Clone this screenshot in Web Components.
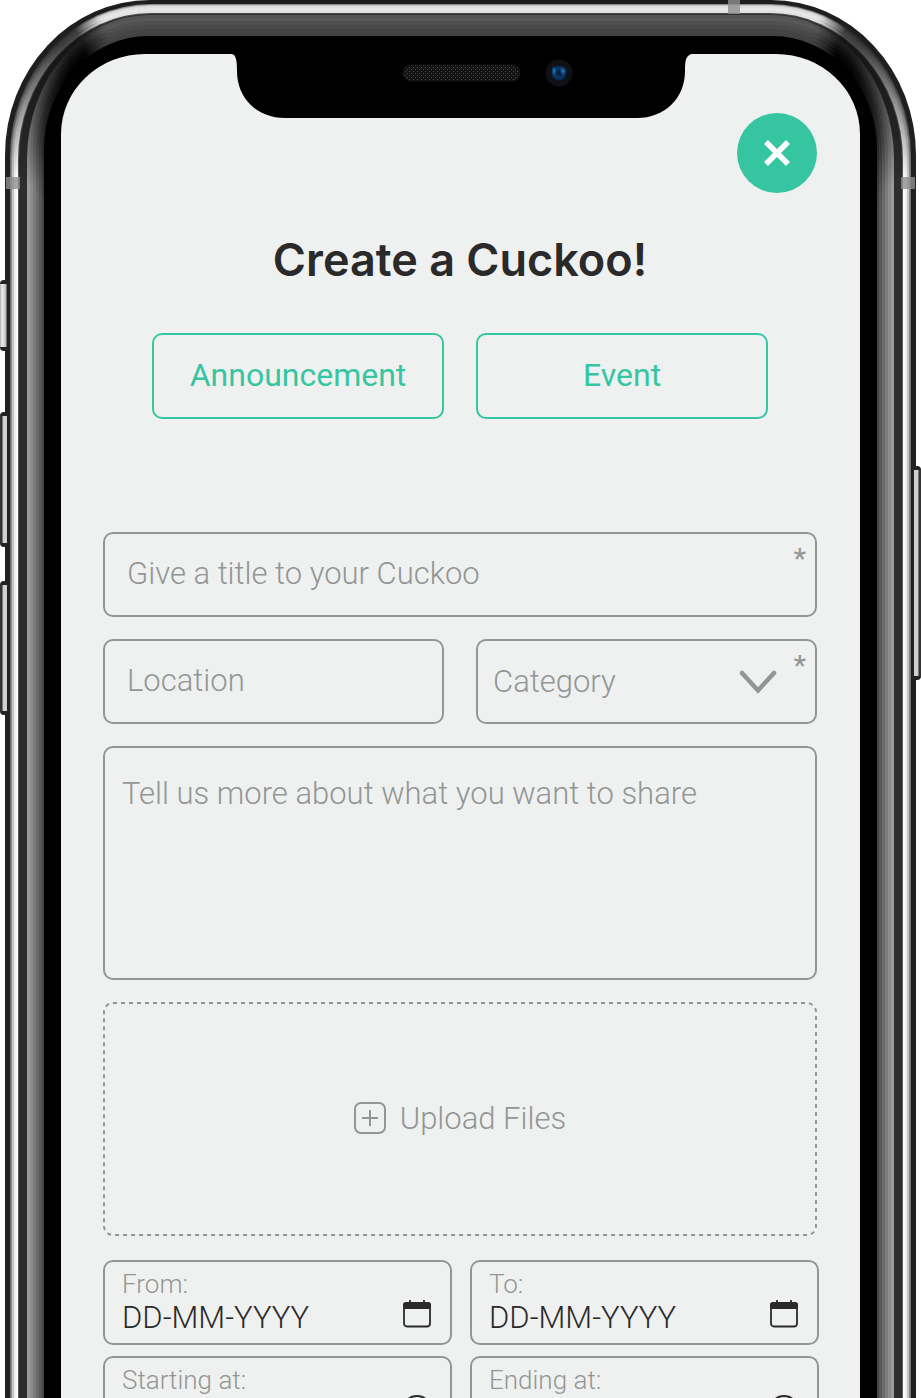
<!DOCTYPE html>
<html lang="en">
<head>
<meta charset="utf-8">
<meta name="viewport" content="width=device-width, initial-scale=1">
<title>Create a Cuckoo</title>
<style>
  body { margin: 0; background: #fff; color: #2a2a2a; font-family: Roboto, "Liberation Sans", sans-serif; font-weight: 300;
    --line: #939694; --accent: #35c6a1; --paper: #eff1f0; --ink: #2a2a2a; --text: 31px; }
  cuckoo-form { --gap: 22px; }
</style>
</head>
<body>
<phone-frame>
  <cuckoo-form></cuckoo-form>
</phone-frame>

<script>
const BASE = `*{box-sizing:border-box} button,input,select,textarea{font:inherit;color:inherit;margin:0;background:none}
  svg{display:block}
  .box{border:2px solid var(--edge,var(--line));border-radius:10px;width:100%;display:block}
  ::placeholder{color:var(--line);opacity:1}
  .star{position:absolute;right:11px;top:11px;font-size:28px;line-height:32px;font-weight:500;color:var(--line)}`;

function define(name, css, html, setup) {
  customElements.define(name, class extends HTMLElement {
    connectedCallback() {
      if (this.shadowRoot) return;
      const root = this.attachShadow({ mode: 'open' });
      root.innerHTML = `<style>${BASE}${css}</style>${typeof html === 'function' ? html(this) : html}`;
      if (setup) setup(root, this);
    }
  });
}

// Rings of the bezel from the outside in:
// [side width, top width, corner x radius, corner y radius, top colour, corner colour, side colour]
const RINGS = [
  [5, 4, 145, 155, '#1e1e1e', '#1e1e1e', '#202020'],
  [1, 1, 141, 152, '#8a8a8a', '#2a2a2a', '#707070'],
  [1, 1, 140, 151, '#c8c8c8', '#303030', '#8c8c8c'],
  [2, 2, 139, 150, '#dedede', '#383838', '#c4c4c4'],
  [2, 3, 137, 149, '#e6e6e6', '#404040', '#f0f0f0'],
  [2, 2, 135, 148, '#e0e0e0', '#484848', '#fdfdfd'],
  [1, 1, 133, 147, '#4a4a4a', '#222222', '#5c5c5c'],
  [8, 1, 132, 146, '#303030', '#151515', '#2d2d2d'],
  [3, 3, 122, 144, '#545454', '#1c1c1c', '#9a9a9a'],
  [3, 3, 119, 139, '#585858', '#181818', '#8c8c8c'],
  [3, 4, 116, 134, '#505050', '#101010', '#7c7c7c'],
  [3, 4, 113, 129, '#4a4a4a', '#080808', '#6a6a6a'],
  [3, 4, 110, 124, '#454545', '#040404', '#585858'],
  [2, 3, 107, 119, '#424242', '#000000', '#454545'],
  [17, 18, 104, 114, '#000000', '#000000', '#000000']
];

define('phone-frame', `
  :host{display:block;position:relative;height:100vh;overflow:hidden;padding:0 5px}
  .ring{padding:var(--t) var(--s) 0;border-radius:var(--rx) var(--rx) 0 0 / var(--ry) var(--ry) 0 0;height:100%;
    background:linear-gradient(var(--a) 0,var(--a) 11px,var(--b) 25px,var(--b) 38px,var(--c) 170px)}
  .screen{height:100%;background:var(--paper);border-radius:84px 84px 0 0 / 80px 80px 0 0;overflow:hidden auto;scrollbar-width:none}
  .over{position:absolute}
  .notch{top:53px;left:0;right:0;margin:auto;width:460px}
  .band{background:#8f8f8fcc}
  .key{background:linear-gradient(90deg,#333 0 2px,#777 2px 3px,#d0d0d0 3px 7px,#222 7px);border:solid #222;border-width:4px 0;border-radius:4px 0 0 4px;left:0;width:9px}
  .mute{background:linear-gradient(90deg,#aaa,#eee 2px,#bbb 6px,#222 7px)}
  .power{left:auto;right:0;transform:scaleX(-1)}`,
  `<div id="rings"></div>
   <svg class="over notch" viewBox="0 0 460 66" aria-hidden="true">
     <defs><pattern id="mesh" width="4" height="4" patternUnits="userSpaceOnUse"><rect width="4" height="4" fill="#141414"/><path d="M0 0h1v1H0zM2 2h1v1H2z" fill="#484848"/></pattern>
     <radialGradient id="lens"><stop offset="0" stop-color="#06182c"/><stop offset=".65" stop-color="#0b3a70"/><stop offset="1" stop-color="#061427"/></radialGradient>
     <radialGradient id="glint"><stop offset="0" stop-color="#2a8ad8"/><stop offset="1" stop-color="#0b3a70" stop-opacity="0"/></radialGradient></defs>
     <path d="M0 0v1C5 1 6 7 6 18C6 46 27 65 54 65H406C433 65 454 46 454 18C454 7 455 1 463 1V0Z"/>
     <rect x="172" y="12" width="117" height="16" rx="8" fill="url(#mesh)" stroke="#151515"/>
     <circle cx="328" cy="20" r="13.500" fill="#101114"/><circle cx="328" cy="20" r="8" fill="url(#lens)"/>
     <ellipse cx="323" cy="18" rx="3" ry="6" fill="url(#glint)"/><ellipse cx="332" cy="18" rx="4" ry="5" fill="url(#glint)"/>
   </svg>
   <div class="over band" style="left:6px;top:177px;width:14px;height:12px"></div>
   <div class="over band" style="right:6px;top:177px;width:14px;height:12px"></div>
   <div class="over band" style="right:181px;top:0;width:12px;height:14px"></div>
   <div class="over key mute" style="top:280px;height:71px"></div>
   <div class="over key" style="top:412px;height:135px"></div>
   <div class="over key" style="top:581px;height:134px"></div>
   <div class="over key power" style="top:466px;height:214px"></div>`,
  root => {
    let host = root.getElementById('rings');
    host.style.height = '100%';
    for (const [s, t, rx, ry, a, b, c] of RINGS) {
      const ring = document.createElement('div');
      ring.className = 'ring';
      Object.entries({ s: s + 'px', t: t + 'px', rx: rx + 'px', ry: ry + 'px', a, b, c }).forEach(([k, v]) => ring.style.setProperty('--' + k, v));
      host.append(ring);
      host = ring;
    }
    host.innerHTML = '<div class="screen"><slot></slot></div>';
  });

define('close-button', `
  :host{display:block}
  button{width:80px;height:80px;border:0;border-radius:50%;background:var(--accent);display:grid;place-items:center;padding:0}`,
  `<button type="button" aria-label="Close"><svg width="28" height="28" viewBox="0 0 28 28" fill="none" stroke="#fff" stroke-width="5.500"><path d="M3 3L25 25M25 3L3 25"/></svg></button>`);

define('type-button', `
  :host{display:block;flex:1;--edge:var(--accent)}
  button{height:86px;color:var(--accent);font-weight:400;font-size:32px;padding:0 0 2px}`,
  `<button type="button" class="box"><slot></slot></button>`);

define('text-field', `
  :host{display:block;position:relative}
  input{height:85px;padding:0 22px 2px;font-size:var(--text)}`,
  el => `<input class="box" type="text" placeholder="${el.getAttribute('hint')}" aria-label="${el.getAttribute('hint')}">
    ${el.hasAttribute('required') ? '<span class="star" aria-hidden="true">*</span>' : ''}`);

define('select-field', `
  :host{display:block;position:relative}
  select{appearance:none;height:85px;padding:0 15px;font-size:var(--text);color:var(--line)}
  svg{position:absolute;right:40px;top:31px;pointer-events:none}`,
  el => `<select class="box" aria-label="${el.getAttribute('hint')}"><option>${el.getAttribute('hint')}</option></select>
    <svg width="38" height="24" viewBox="0 0 38 24" fill="none" stroke="#939694" stroke-width="4.500" stroke-linecap="round"><path d="M3 3L19 20.500L35 3"/></svg>
    <span class="star" aria-hidden="true">*</span>`);

define('note-field', `
  :host{display:block}
  textarea{height:234px;resize:none;padding:28px 17px;font-size:var(--text);line-height:36px}`,
  el => `<textarea class="box" placeholder="${el.getAttribute('hint')}" aria-label="${el.getAttribute('hint')}"></textarea>`);

define('upload-box', `
  :host{display:block}
  label{position:relative;display:flex;align-items:center;justify-content:center;gap:14px;height:234px;color:var(--line);font-size:var(--text);padding-bottom:2px}
  .edge{position:absolute;inset:0;width:100%;height:100%}
  input{position:absolute;opacity:0;inset:0;width:100%;height:100%}`,
  `<label><svg class="edge" aria-hidden="true"><rect x="1" y="1" rx="9" fill="none" stroke="#939694" stroke-width="2" stroke-dasharray="4 4" style="width:calc(100% - 2px);height:calc(100% - 2px)"/></svg>
    <svg width="32" height="32" viewBox="0 0 32 32" fill="none" stroke="#939694" stroke-width="2"><rect x="1" y="1" width="30" height="30" rx="6"/><path d="M8 16h16M16 8v16"/></svg>
    <span><slot></slot></span><input type="file" multiple></label>`);

const CALENDAR = `<svg width="30" height="30" viewBox="0 0 30 30" fill="none" stroke="#2a2a2a" stroke-width="1.800"><rect x="2" y="4" width="26" height="23.500" rx="3"/><path d="M1 10V6q0-3 3-3h22q3 0 3 3v4Z" fill="#2a2a2a" stroke="none"/><path d="M8 1v4M22 1v4"/></svg>`;
const CLOCK = `<svg width="30" height="30" viewBox="0 0 30 30" fill="none" stroke="#2a2a2a" stroke-width="2"><circle cx="15" cy="15" r="14"/><path d="M15 7v8l6 4"/></svg>`;

define('when-field', `
  :host{display:block}
  .box{display:grid;grid-template-columns:1fr 30px;height:85px;padding:7px 18px 8px 17px}
  label{grid-column:1/-1;font-size:26px;line-height:30px;color:var(--line)}
  input{border:0;padding:0;width:100%;font-size:var(--text);line-height:38px;height:38px}
  input::placeholder{color:var(--ink)}`,
  el => `<div class="box"><label for="w">${el.getAttribute('label')}</label><input id="w" type="text" placeholder="${el.getAttribute('hint')}">${el.hasAttribute('clock') ? CLOCK : CALENDAR}</div>`);

define('cuckoo-form', `
  :host{display:block;padding:59px 43px 24px 42px}
  header{display:flex;flex-direction:column;align-items:flex-end}
  h1{align-self:center;margin:39px 0 0;font:600 45px/56px Inter,"Liberation Sans",sans-serif;color:var(--ink)}
  .types{display:flex;gap:32px;margin:45px 49px 0}
  form{display:grid;gap:var(--gap);margin-top:113px}
  .pair{display:grid;grid-template-columns:1fr 1fr;gap:32px}
  .when{display:grid;grid-template-columns:1fr 1fr;gap:11px 18px;margin:2px -2px 0 0}`,
  `<header><close-button></close-button><h1>Create a Cuckoo!</h1></header>
   <div class="types"><type-button>Announcement</type-button><type-button>Event</type-button></div>
   <form>
     <text-field hint="Give a title to your Cuckoo" required></text-field>
     <div class="pair"><text-field hint="Location"></text-field><select-field hint="Category"></select-field></div>
     <note-field hint="Tell us more about what you want to share"></note-field>
     <upload-box>Upload Files</upload-box>
     <div class="when">
       <when-field label="From:" hint="DD-MM-YYYY"></when-field><when-field label="To:" hint="DD-MM-YYYY"></when-field>
       <when-field label="Starting at:" hint="HH:MM" clock></when-field><when-field label="Ending at:" hint="HH:MM" clock></when-field>
     </div>
   </form>`);
</script>
</body>
</html>
